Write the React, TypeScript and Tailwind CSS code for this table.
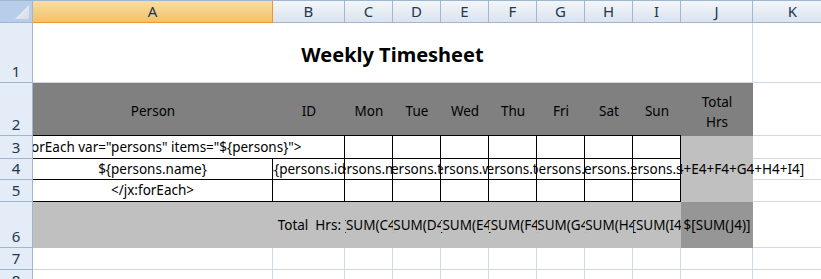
import type { ReactNode } from "react";

const font = { fontFamily: '"Noto Sans", "Liberation Sans", sans-serif' };

const grid = "border-r border-b border-[#d0d7e5]";
const boxed = "border-r border-b border-black";

const days = ["mon", "tue", "wed", "thu", "fri", "sat", "sun"];
const dayLabels = ["Mon", "Tue", "Wed", "Thu", "Fri", "Sat", "Sun"];
const dayCols = ["C", "D", "E", "F", "G", "H", "I"];

function Cell({
  className = "",
  children,
}: {
  className?: string;
  children?: ReactNode;
}) {
  return (
    <div
      className={`flex items-center justify-center overflow-hidden whitespace-nowrap text-[13.5px] text-black ${className}`}
    >
      {children}
    </div>
  );
}

function ColHead({ label, selected }: { label: string; selected?: boolean }) {
  return (
    <div
      className={
        selected
          ? "flex items-center justify-center border-r border-b border-[#f29436] bg-[linear-gradient(#f9dca6,#f1c266)] text-[15px] text-[#22384f]"
          : "flex items-center justify-center border-r border-b border-[#9eb6ce] bg-[linear-gradient(#f3f6fa,#dbe3ee)] text-[15px] text-[#22384f]"
      }
    >
      {label}
    </div>
  );
}

function RowHead({ n }: { n: number }) {
  return (
    <div className="flex items-end justify-center border-r border-b border-[#9eb6ce] bg-[#e4ecf7] pb-px text-[15px] leading-[19px] text-[#22384f]">
      {n}
    </div>
  );
}

export default function App() {
  return (
    <div className="h-[279px] w-[821px] overflow-hidden bg-white" style={font}>
      <div className="grid grid-cols-[33px_240px_72px_48px_48px_48px_48px_48px_48px_48px_72px_80px] grid-rows-[22px_60px_53px_23px_21px_22px_46px_22px_22px] border-t border-[#9eb6ce]">
        {/* column letters */}
        <div className="relative border-r border-b border-[#9eb6ce] bg-[#b7cdea]">
          <svg className="absolute right-[3px] bottom-[3px]" width="14" height="14" viewBox="0 0 14 14">
            <defs>
              <linearGradient id="corner" x1="0" y1="0" x2="1" y2="1">
                <stop offset="0" stopColor="#f4f6f9" />
                <stop offset="1" stopColor="#d6dbe2" />
              </linearGradient>
            </defs>
            <path d="M14 0 L14 14 L0 14 Z" fill="url(#corner)" />
          </svg>
        </div>
        <ColHead label="A" selected />
        <ColHead label="B" />
        {dayCols.map((c) => (
          <ColHead key={c} label={c} />
        ))}
        <ColHead label="J" />
        <ColHead label="K" />

        {/* row 1: title */}
        <RowHead n={1} />
        <Cell className={`col-span-10 ${grid} pt-1 text-[20px] font-bold`}>Weekly Timesheet</Cell>
        <Cell className={grid} />

        {/* row 2: header */}
        <RowHead n={2} />
        <Cell className="border-b border-black bg-[#808080] pt-1 text-[#f4f4f4]">Person</Cell>
        <Cell className="border-b border-black bg-[#808080] pt-1 text-[#f4f4f4]">ID</Cell>
        {dayLabels.map((d) => (
          <Cell key={d} className="border-b border-black bg-[#808080] pt-1 text-[#f4f4f4]">
            {d}
          </Cell>
        ))}
        <Cell className="flex-col bg-[#808080] pt-1 leading-[20px] text-[#f4f4f4]">
          <span>Total</span>
          <span>Hrs</span>
        </Cell>
        <Cell className={grid} />

        {/* row 3: loop start */}
        <RowHead n={3} />
        <Cell className={`col-span-2 justify-start ${boxed}`}>
          <div className="flex w-[240px] shrink-0 justify-center">
            <span>{'<jx:forEach var="persons" items="${persons}">'}</span>
          </div>
        </Cell>
        {days.map((d) => (
          <Cell key={d} className={boxed} />
        ))}
        <Cell className="bg-[#c0c0c0]" />
        <Cell className={grid} />

        {/* row 4: person values */}
        <RowHead n={4} />
        <Cell className={boxed}>{"${persons.name}"}</Cell>
        <Cell className={boxed}>{"${persons.id}"}</Cell>
        {days.map((d) => (
          <Cell key={d} className={boxed}>
            {"${persons." + d + "}"}
          </Cell>
        ))}
        <Cell className="relative z-10 overflow-visible bg-[#c0c0c0] [clip-path:inset(0_-120px_0_0)]">
          <span>{"$[C4+D4+E4+F4+G4+H4+I4]"}</span>
        </Cell>
        <Cell className={grid} />

        {/* row 5: loop end */}
        <RowHead n={5} />
        <Cell className={boxed}>{"</jx:forEach>"}</Cell>
        <Cell className={boxed} />
        {days.map((d) => (
          <Cell key={d} className={boxed} />
        ))}
        <Cell className="bg-[#c0c0c0]" />
        <Cell className={grid} />

        {/* row 6: totals */}
        <RowHead n={6} />
        <Cell className="bg-[#c0c0c0]" />
        <Cell className="justify-end bg-[#c0c0c0] pr-1">Total&nbsp; Hrs:</Cell>
        {dayCols.map((c) => (
          <Cell key={c} className="bg-[#c0c0c0]">
            {"$[SUM(" + c + "4)]"}
          </Cell>
        ))}
        <Cell className="bg-[#969696]">{"$[SUM(J4)]"}</Cell>
        <Cell className={grid} />

        {/* rows 7-8: empty */}
        {[7, 8].map((r) => (
          <div key={r} className="contents">
            <RowHead n={r} />
            <Cell className={grid} />
            <Cell className={grid} />
            {days.map((d) => (
              <Cell key={d} className={grid} />
            ))}
            <Cell className={grid} />
            <Cell className={grid} />
          </div>
        ))}
      </div>
    </div>
  );
}
